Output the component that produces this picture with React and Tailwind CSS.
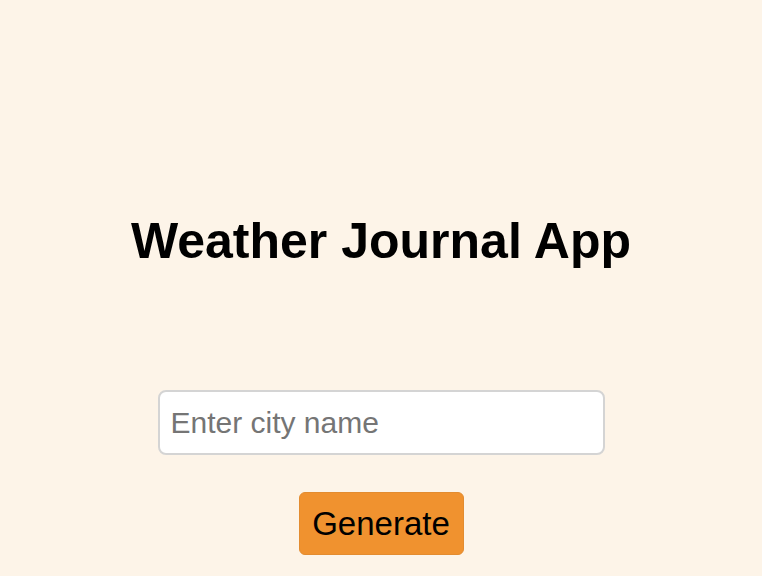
export default function App() {
  return (
    <div className="min-h-screen bg-[#fdf4e8] font-['Liberation_Sans',Arial,sans-serif] text-black">
      <div className="flex flex-col items-center pt-[216px]">
        <h1 className="text-[50px] font-bold leading-none">Weather Journal App</h1>

        <input
          type="text"
          placeholder="Enter city name"
          className="mt-[124px] h-[65px] w-[447px] rounded-lg border-2 border-[#d4d4d4] bg-white px-[11px] text-[30px] text-black placeholder:text-[#757575] outline-none"
        />

        <button
          type="button"
          className="mt-[37px] flex h-[63px] w-[165px] items-center justify-center rounded-md border border-[#e38c30] bg-[#f0922f] text-[33px] text-black"
        >
          Generate
        </button>
      </div>
    </div>
  );
}
